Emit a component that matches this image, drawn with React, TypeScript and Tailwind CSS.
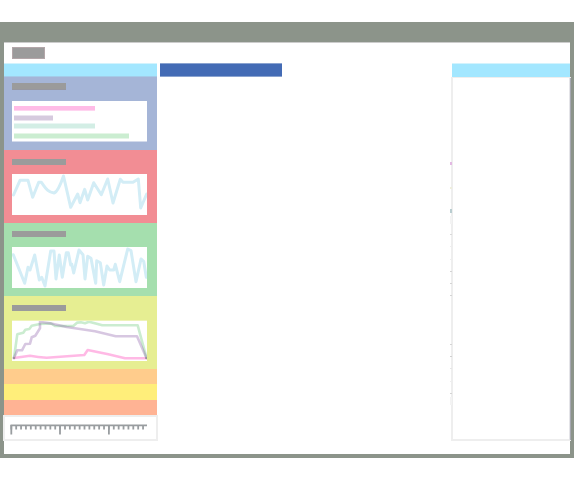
import type { ReactNode } from 'react';

const ticks = Array.from({ length: 28 }, (_, i) => i);

const marks = [
  { y: 85, h: 3, c: '#e3b9e3' },
  { y: 110, h: 2, c: '#eeeedd' },
  { y: 132, h: 4, c: '#b9cdd0' },
  { y: 139, h: 8, c: '#f3f3f3' },
  { y: 157, h: 1, c: '#d9d9d9' },
  { y: 169, h: 1, c: '#eeeeee' },
  { y: 182, h: 1, c: '#eeeeee' },
  { y: 194, h: 1, c: '#d4d4d4' },
  { y: 206, h: 1, c: '#d4d4d4' },
  { y: 218, h: 1, c: '#d4d4d4' },
  { y: 267, h: 1, c: '#d4d4d4' },
  { y: 279, h: 1, c: '#d0d0d0' },
  { y: 291, h: 1, c: '#e6e6e6' },
  { y: 304, h: 1, c: '#eeeeee' },
  { y: 316, h: 1, c: '#d4d4d4' },
  { y: 320, h: 8, c: '#f3f3f3' },
];

function Panel({ className, label, children }: { className: string; label: string; children: ReactNode }) {
  return (
    <section className={`h-[73px] shrink-0 px-2 ${className}`}>
      <div className={`w-[54px] bg-[#9b9b9b] ${label}`} />
      {children}
    </section>
  );
}

function Chart({ className, viewBox = '0 0 135 41', children }: { className: string; viewBox?: string; children: ReactNode }) {
  return (
    <svg
      className={`block w-[135px] bg-white ${className}`}
      viewBox={viewBox}
      fill="none"
      strokeWidth="3"
      strokeLinejoin="round"
      strokeLinecap="round"
    >
      {children}
    </svg>
  );
}

export default function App() {
  return (
    <div className="h-[480px] w-[574px] overflow-hidden bg-white pt-[22px]">
      <div className="h-[436px] bg-[#8c948a] px-1 pt-5 pb-1">
        <main className="flex h-[412px] flex-col border-t border-[#cccccc] bg-white">
          <div className="h-[20px] shrink-0 px-2 pt-1">
            <div className="h-3 w-[33px] border border-[#b3a6a9] bg-[#9b9b9b]" />
          </div>
          <div className="flex">
            <aside className="flex w-[153px] shrink-0 flex-col">
              <div className="h-[14px] border-t border-b border-t-[#d3f3fd] border-b-[#a4cce8] bg-[#a3e7ff]" />
              <Panel className="bg-[#a5b5d7] pt-[6px]" label="h-[7px] border-b border-[#9797a1]">
                <div className="mt-[11px] flex h-[41px] w-[135px] flex-col border-b border-[#d3daeb] bg-white pt-[5px] pl-0.5">
                  <div className="h-[5px] w-[81px] border-b border-[#ffd4f0] bg-[#ffbbe6]" />
                  <div className="mt-1 h-[6px] w-[39px] border-y border-[#ebe4ef] bg-[#d6cade]" />
                  <div className="mt-[2px] h-[6px] w-[81px] border-y border-[#e9f6f3] bg-[#d3eee5]" />
                  <div className="mt-[4px] h-[6px] w-[115px] border-y border-[#e5f6e7] bg-[#cbedd1]" />
                </div>
              </Panel>
              <Panel className="bg-[#f28d94] pt-[9px]" label="h-[6px]">
                <Chart className="mt-[9px] h-[41px]">
                  <path stroke="#d3edf6" d="M1.5 21L8 6.3H16L20.7 23.3L26.7 8.3H29.3C33 13 35 18 42 19Q46 18 51.5 2L58.7 33.3L65.7 20L68 28.7L72.7 15.3L75.7 26L81.7 8.7L89.3 20.7L95.7 5L101 29L108.3 5.3L111 8.3H121L126.3 5L128.7 34L134.7 20" />
                </Chart>
              </Panel>
              <Panel className="bg-[#a5dfae] pt-[8px]" label="h-[6px]">
                <Chart className="mt-[10px] h-[41px]">
                  <path stroke="#d3edf6" d="M1.3 7.7L12.7 36.3L16 20.3L18 23L22.7 8L27.3 33L29.7 30.3L33 39L38.7 4H42L44 32L47.3 8L50.3 30.3L54.3 5.7H56.3L58.7 18L59.7 17L61.7 26L67 3L71 7.7L73 32L75.7 9.3L79 11.3L83.7 36.3L84.7 13.7L88.3 15.7L91.7 38L95 19L97.7 23H101.7L103.3 17.3L107.7 34.7L115.7 2L119 3.7L124 34.7L129 12L131.7 14.3L134.3 30.3" />
                </Chart>
              </Panel>
              <Panel className="bg-[#e6ee92] pt-[9px]" label="h-[6px]">
                <div className="mt-[9px] w-[135px] border-t border-[#eef3b8]">
                  <Chart className="h-[40px]" viewBox="0 1 135 40">
                    <g strokeWidth="2.6">
                      <path stroke="#5cc46c" strokeOpacity=".32" d="M2 38L5.3 14.3L11.3 12.7L13.3 9.7L17.3 9L19.7 5.7L28 4L39 3.5L43 6H61.3L65.3 2.6L69 2.3L73 3.3L77 1.7L90.3 5.3H125.7L134.5 38" />
                      <path stroke="#7b479b" strokeOpacity=".3" d="M2 38L5.3 30.3H10L13.3 24L18 23.7L19.7 17.3L23.3 15.7L28 8.3V1.9L38 3.3L54.7 7L73 9.7L83 11.3L103.7 16.3H125L134.5 38" />
                      <path stroke="#ff78cd" strokeOpacity=".52" d="M2 38L18 35.7Q26 37 34.7 37.7L72.3 35L75.7 30L96.3 34.3L113 38.3H134.5" />
                      <path stroke="#9a929c" strokeWidth="2" d="M1.8 38H2.2M134.1 38H134.5" />
                    </g>
                  </Chart>
                </div>
              </Panel>
              <div className="h-[15px] bg-[#ffcc8c]" />
              <div className="h-4 bg-[#ffee7a]" />
              <div className="h-[15px] bg-[#ffb394]" />
              <div className="relative -ml-px h-[26px] w-[155px] border-2 border-[#eeeeee]">
                <svg className="block h-[22px] w-[151px]" viewBox="5 417 151 22" fill="none" stroke="#999da0">
                  <path strokeWidth="1.8" d="M10.5 425.3H147M11.3 425V434.5M60 425V434.5M108.9 425V434.5" />
                  {ticks.map((i) => (
                    <path key={i} strokeWidth="1.8" d={`M${11.3 + i * 4.88} 425V429.5`} />
                  ))}
                </svg>
              </div>
            </aside>
            <div className="ml-[3px] h-[14px] w-[122px] border-t border-b border-[#8aa3d0] bg-[#436bb5]" />
            <section className="mr-[-1px] ml-auto w-[120px]">
              <div className="mr-px ml-px h-[14px] border-t border-[#d3f3fd] bg-[#a3e7ff]" />
              <div className="relative h-[364px] border-2 border-t border-r-0 border-[#eeeeee]">
                <div className="absolute top-0 right-0 h-[362px] w-[2px] border-l border-[#e4e4e8] bg-[#a5a7b0]" />
                {marks.map((m) => (
                  <span key={m.y} className="absolute -left-[3px] w-[2px]" style={{ top: m.y - 1, height: m.h, backgroundColor: m.c }} />
                ))}
              </div>
            </section>
          </div>
        </main>
      </div>
    </div>
  );
}
